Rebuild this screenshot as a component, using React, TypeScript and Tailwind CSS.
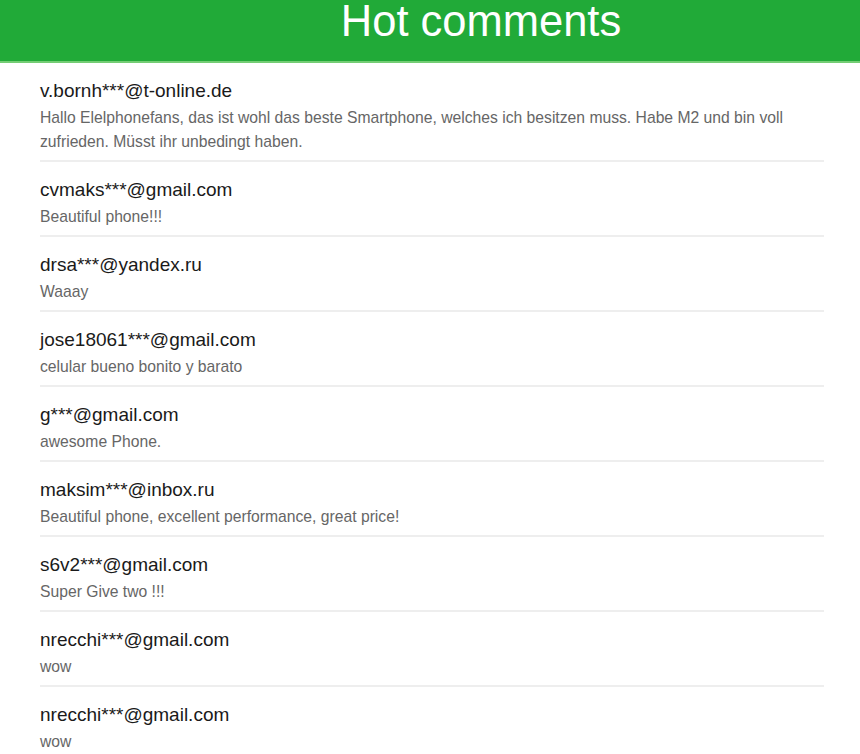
import React from "react";

const comments: { name: string; text: string }[] = [
  {
    name: "v.bornh***@t-online.de",
    text: "Hallo Elelphonefans, das ist wohl das beste Smartphone, welches ich besitzen muss. Habe M2 und bin voll zufrieden. Müsst ihr unbedingt haben.",
  },
  { name: "cvmaks***@gmail.com", text: "Beautiful phone!!!" },
  { name: "drsa***@yandex.ru", text: "Waaay" },
  { name: "jose18061***@gmail.com", text: "celular bueno bonito y barato" },
  { name: "g***@gmail.com", text: "awesome Phone." },
  { name: "maksim***@inbox.ru", text: "Beautiful phone, excellent performance, great price!" },
  { name: "s6v2***@gmail.com", text: "Super Give two !!!" },
  { name: "nrecchi***@gmail.com", text: "wow" },
  { name: "nrecchi***@gmail.com", text: "wow" },
];

export default function App() {
  return (
    <div className="w-[860px] h-[754px] overflow-hidden bg-white font-['Liberation_Sans',Arial,sans-serif]">
      <div className="h-[63px] bg-[#21aa38] border-b-2 border-[#74cd74] overflow-hidden">
        <h1 className="pl-[102px] text-center text-white text-[43.5px] leading-[42px] font-normal">
          Hot comments
        </h1>
      </div>
      <div className="ml-[40px] w-[784px]">
        {comments.map((c, i) => (
          <div key={i} className="pt-[15px] pb-[6px] border-b-2 border-[#eeeeee]">
            <div className="text-[19px] leading-[26px] text-[#1a1a1a]">{c.name}</div>
            <div className="mt-[2px] text-[15.7px] leading-[24px] text-[#666666]">{c.text}</div>
          </div>
        ))}
      </div>
    </div>
  );
}
